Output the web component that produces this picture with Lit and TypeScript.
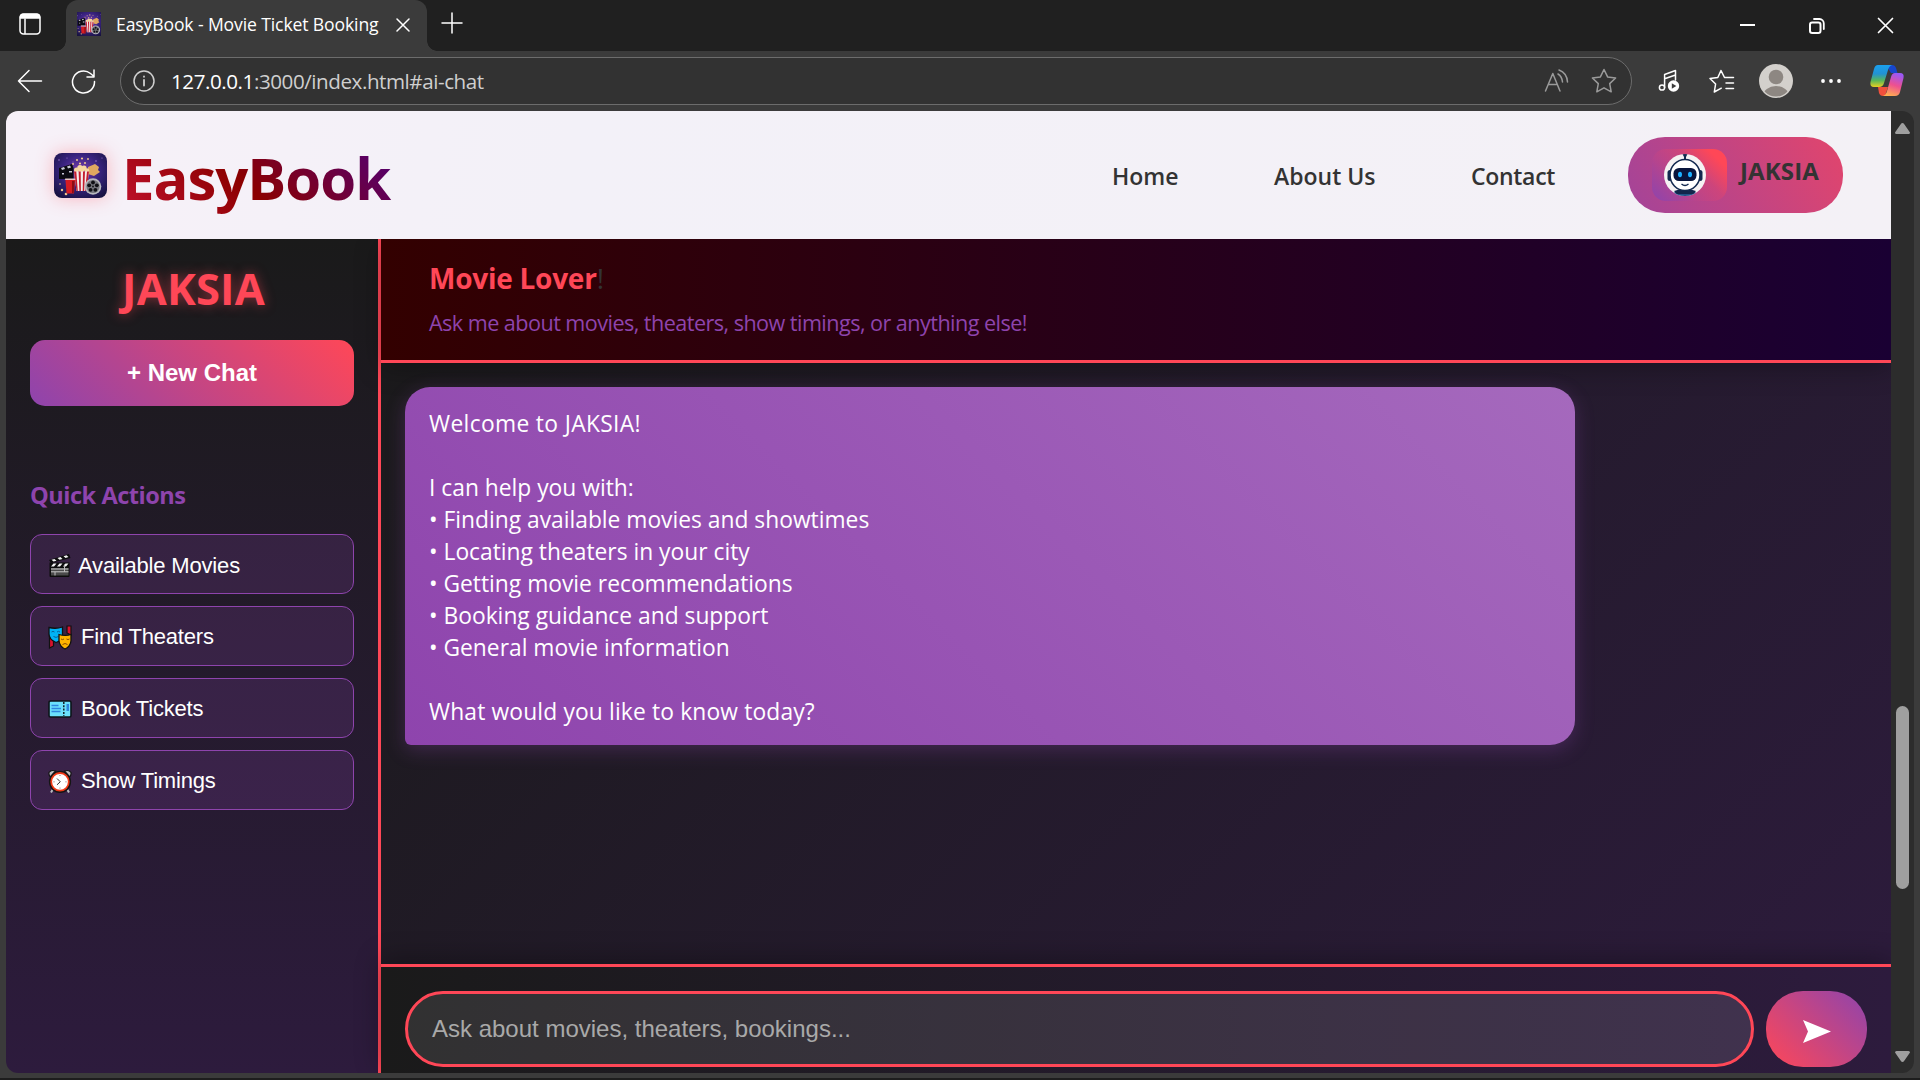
import { LitElement, html, css, svg } from "lit";
import { customElement } from "lit/decorators.js";

const artwork = svg`
  <defs>
    <radialGradient id="night" cx=".5" cy=".4" r=".7"><stop offset="0" stop-color="#7a3fb0"/><stop offset=".5" stop-color="#3a2380"/><stop offset="1" stop-color="#17123f"/></radialGradient>
  </defs>
  <rect width="53" height="45" fill="url(#night)"/>
  <g fill="#b58be0" opacity=".8"><circle cx="5" cy="7" r=".8"/><circle cx="13" cy="5" r=".6"/><circle cx="42" cy="8" r=".8"/><circle cx="48" cy="5" r=".6"/><circle cx="19" cy="9" r=".6"/></g>
  <g fill="#f0c890"><circle cx="23" cy="7" r="1"/><circle cx="28" cy="5.5" r="1.1"/><circle cx="34" cy="6" r=".9"/><circle cx="19" cy="11" r="1"/><circle cx="26" cy="10.5" r="1.1"/><circle cx="31" cy="10" r="1"/><circle cx="8" cy="37" r="1.2"/><circle cx="12" cy="41" r="1.3"/><circle cx="6" cy="31" r=".8"/></g>
  <path d="M5 15l13-4 1.500 4v11H5z" fill="#0b0b12"/>
  <path d="M7 15l3-1 1 2-3 1zM13 13.500l3-1 1 2-3 1zM8 20h2v1.500H8zM15 18h3v1.500h-3z" fill="#c8c8d8"/>
  <path d="M34 14l7-3 4 3-1 3 2 2-6 4-6-2z" fill="#e0a860"/>
  <g fill="#f6d6a0"><circle cx="22.500" cy="17" r="2.500"/><circle cx="26" cy="14.800" r="2.700"/><circle cx="30" cy="15.200" r="2.600"/><circle cx="33" cy="17.500" r="2.200"/><circle cx="27.500" cy="17.500" r="2.500"/></g>
  <path d="M20 18.500h15l-2.500 19.500h-10z" fill="#f5ecec"/>
  <path d="M20 18.500h2.300l1.500 19.500h-1.300zM24.600 18.500h2.100l.2 19.500h-1.500zM29 18.500h2l-.8 19.500h-1.500zM33 18.500h2L32.500 38H31z" fill="#c41e2e"/>
  <path d="M11.500 27h9.500l-1 13.500h-7.500z" fill="#d61c22"/><rect x="10.800" y="25.500" width="10.800" height="1.600" rx=".8" fill="#e8c8c8"/><path d="M18 28h2.500l-.8 12H18z" fill="#8d0d14"/>
  <circle cx="39" cy="33.500" r="8.300" fill="#b9b9be"/><circle cx="39" cy="33.500" r="6.600" fill="#77777e"/>
  <g fill="#101014"><circle cx="39" cy="29.500" r="1.900"/><circle cx="42.800" cy="32.300" r="1.900"/><circle cx="41.400" cy="36.800" r="1.900"/><circle cx="36.600" cy="36.800" r="1.900"/><circle cx="35.200" cy="32.300" r="1.900"/><circle cx="39" cy="33.500" r=".9"/></g>`;

const clapper = svg`<path d="M1 7L21 1l1.500 4L3 10z" fill="#0c0c0c"/><path d="M1.500 9.500h20V23a1 1 0 0 1-1 1h-18a1 1 0 0 1-1-1z" fill="#0c0c0c"/>
  <path d="M3.500 6.700l3-.8 2 1.800-3 .9zM9.500 5l3-.9 2 1.800-3 .9zM15.500 3.200l3-.9 2 1.800-3 .9z" fill="#f2f2f2"/>
  <path d="M5.500 10.500h3L6 13.500H3zM11.500 10.500h3l-2.500 3H9zM17.500 10.500h3l-2.500 3h-3z" fill="#f2f2f2"/>
  <rect x="3" y="15" width="17.500" height="7.500" fill="#4a4a4a"/><path d="M3 18.800h17.500M3 16h17.500" stroke="#c9c9c9" stroke-width="1"/><path d="M7 19v3.500M16.500 11.500V19" stroke="#bdbdbd" stroke-width="1"/>`;
const masks = svg`<path d="M1.500 9l4 3v9l-4 2zM19 1h4v9l-4-2z" fill="#d8122e" stroke="#111" stroke-width="1.200"/>
  <path d="M1 2.500C5 3.500 10 3.500 14.500 2v8c0 4-3.500 6.500-6.500 7.500C4.500 16 1 13 1 9z" fill="#00b2f5" stroke="#111" stroke-width="1.300"/>
  <path d="M3.500 7q1.500-1.300 3 0M9 7q1.500-1.300 3 0M5.500 11.500q2.500 1.800 5 0" fill="none" stroke="#0a5f96" stroke-width="1"/>
  <path d="M11 9.500c4 1.200 8.500 1.200 12 0v6c0 4-3 7.500-6 8.500-3-1-6-4.500-6-8.500z" fill="#ffb300" stroke="#111" stroke-width="1.300"/>
  <path d="M13 14q1.500 1.200 3 0M18.500 14q1.500 1.200 3 0M14.500 19.500q2.500-2 5 0" fill="none" stroke="#8c4d00" stroke-width="1"/>`;
const ticket = svg`<path d="M2.500 4h19A1.500 1.500 0 0 1 23 5.500v13a1.500 1.500 0 0 1-1.500 1.500h-19A1.500 1.500 0 0 1 1 18.500v-13A1.500 1.500 0 0 1 2.500 4z" fill="#6be1fb" stroke="#0d1418" stroke-width="1.600"/>
  <path d="M15.800 5v14" stroke="#0d1418" stroke-width="1.400" stroke-dasharray="2 1.300"/><path d="M3.500 8.500h7M3.500 11.500h9.500M3.500 14.500h9" stroke="#2e86dd" stroke-width="1.300"/><rect x="18.500" y="7" width="2.500" height="7" fill="#2e86dd"/>`;
const clock = svg`<path d="M1 3.500Q3 .5 7.500 2L2.500 8Q.5 6 1 3.500zM23 3.500Q21 .5 16.500 2l5 6q2-2 1.500-4.500z" fill="#b9bcc0" stroke="#151515" stroke-width="1.200"/>
  <path d="M5 20l-2 3.500M19 20l2 3.500" stroke="#b9bcc0" stroke-width="2"/><circle cx="12" cy="12.800" r="9.600" fill="#fff" stroke="#151515" stroke-width="3"/><circle cx="12" cy="12.800" r="8.800" fill="#fff" stroke="#f03a17" stroke-width="1.800"/>
  <path d="M9 9.500l3.300 3.300-3.300 3" fill="none" stroke="#333" stroke-width="1"/><g fill="#777"><circle cx="12" cy="6.500" r=".6"/><circle cx="12" cy="19" r=".6"/><circle cx="18" cy="12.800" r=".6"/><circle cx="6" cy="12.800" r=".6"/></g>`;

@customElement("browser-bar")
class BrowserBar extends LitElement {
  static styles = css`
    :host { display: block; color: #fff; font-family: "Open Sans", sans-serif; }
    svg { display: block; flex: none; fill: none; stroke: currentColor; stroke-width: 1.5; stroke-linecap: round; stroke-linejoin: round; }
    .flat { stroke: none; }
    .strip { display: flex; height: 51px; background: #202020; }
    .workspace { width: 66px; box-sizing: border-box; padding: 13px 0 0 19px; }
    .tab { position: relative; width: 361px; box-sizing: border-box; display: flex; align-items: center; padding: 0 17px 3px 11px; background: #3b3b3b; border-radius: 12px 12px 0 0; }
    .tab::before, .tab::after { content: ""; position: absolute; bottom: 0; width: 10px; height: 10px; }
    .tab::before { left: -10px; background: radial-gradient(circle at 0 0, #202020 9.5px, #3b3b3b 10px); }
    .tab::after { right: -10px; background: radial-gradient(circle at 100% 0, #202020 9.5px, #3b3b3b 10px); }
    .title { margin-left: 15px; font-size: 17.6px; white-space: nowrap; letter-spacing: -.13px; }
    .tab .close { margin-left: auto; margin-top: 2px; }
    .plus { margin: 12px 0 0 14px; }
    .windows { margin-left: auto; display: flex; gap: 52px; padding: 17px 26px 0 0; }
    .tools { display: flex; align-items: center; height: 60px; background: #3b3b3b; box-sizing: border-box; padding: 0 15px 0 17px; }
    .address { width: 1512px; height: 48px; box-sizing: border-box; margin-left: 24px; display: flex; align-items: center; border: 1px solid #6c6c6c; border-radius: 24px; background: #323232; padding: 0 14px 0 12px; }
    .url { margin-left: 16px; font-size: 20.6px; color: #cfcfcf; white-space: nowrap; letter-spacing: -.44px; }
    .url b { font-weight: 400; color: #fff; }
    .info { color: #cfcfcf; }
    .dim { color: #9a9a9a; }
    .read { margin-left: auto; margin-right: 22px; }
    .refresh { margin-left: 28px; }
    .music { margin-left: 26px; }
    .fav { margin-left: 29px; }
    .avatar { margin-left: 24px; }
    .dots { margin-left: 27px; }
    .copilot { margin-left: 27px; }
  `;
  render() {
    return html`
      <div class="strip">
        <div class="workspace"><svg width="22" height="22" viewBox="0 0 22 22"><rect x="1" y="1" width="20" height="20" rx="3.500"/><path d="M1.500 5V3.500A2 2 0 0 1 3.500 1.500h15a2 2 0 0 1 2 2V5z" fill="#fff"/><path d="M6 6v14.500" /></svg></div>
        <div class="tab">
          <svg class="flat" width="24" height="24" viewBox="4 0 45 45">${artwork}</svg>
          <span class="title">EasyBook - Movie Ticket Booking</span>
          <svg class="close" width="14" height="14" viewBox="0 0 14 14"><path d="M1 1l12 12M13 1L1 13"/></svg>
        </div>
        <svg class="plus" width="22" height="22" viewBox="0 0 22 22"><path d="M11 1v20M1 11h20"/></svg>
        <div class="windows">
          <svg width="17" height="17" viewBox="0 0 17 17"><path d="M1 8h15" stroke-width="2" stroke-linecap="butt"/></svg>
          <svg width="17" height="17" viewBox="0 0 17 17"><rect x="2" y="5.500" width="10.500" height="10.500" rx="2.200" stroke-width="2"/><path d="M6 2h5.500A4.500 4.500 0 0 1 15.800 6.500V12" stroke-width="1.800"/></svg>
          <svg width="17" height="17" viewBox="0 0 17 17"><path d="M1.500 1.500l14 14M15.500 1.500l-14 14" stroke-width="1.700"/></svg>
        </div>
      </div>
      <div class="tools">
        <svg width="26" height="24" viewBox="0 0 26 24"><path d="M12 1.500L1.500 12 12 22.500M1.500 12h23"/></svg>
        <svg class="refresh" width="25" height="25" viewBox="0 0 25 25"><path d="M23.500 12.500A11 11 0 1 1 19.500 4.500l3.500 3M23 1v7h-7"/></svg>
        <div class="address">
          <svg class="info" width="22" height="22" viewBox="0 0 22 22"><circle cx="11" cy="11" r="10"/><path d="M11 10v5.500M11 6.500v.3" stroke-width="1.800"/></svg>
          <span class="url"><b>127.0.0.1</b>:3000/index.html#ai-chat</span>
          <svg class="read dim" width="25" height="24" viewBox="0 0 25 24"><path d="M1.500 22L8.800 4.500 16 22M4.500 15.500h8.800M14 5q4 2.500 4.500 8M15 1q8 3 8.500 12" /></svg>
          <svg class="dim" width="26" height="26" viewBox="0 0 26 26"><path d="M13 1.500l3.600 7.400 8 1.100-5.900 5.600 1.500 8.200-7.200-4-7.200 4 1.500-8.200L1.400 10l8-1.100z"/></svg>
        </div>
        <svg class="music" width="22" height="24" viewBox="0 0 22 24"><circle cx="4" cy="18.500" r="2.600"/><path d="M6.600 18.500V5.500L17.500 1.500V11M6.600 9.800L17.500 6"/><g class="flat"><circle cx="15.500" cy="17" r="5.700" fill="#fff"/><path d="M13.800 14.300v5.400l4.500-2.700z" fill="#3b3b3b"/></g></svg>
        <svg class="fav" width="26" height="25" viewBox="0 0 26 25"><path d="M15.500 8.500h9M17 14h7.500M17 19.500h7.500M15.500 8.500L12 1.500 8.800 8.500 1 9.500l5.600 5.500L5.300 23l7-3.800"/></svg>
        <svg class="avatar" width="34" height="34" viewBox="0 0 34 34"><defs><clipPath id="face"><circle cx="17" cy="17" r="15.500"/></clipPath></defs><g class="flat"><circle cx="17" cy="17" r="17" fill="#d3d0cc"/><circle cx="17" cy="13" r="7.300" fill="#8d8782"/><ellipse cx="17" cy="32" rx="13" ry="10" fill="#8d8782" clip-path="url(#face)"/></g></svg>
        <svg class="dots" width="22" height="6" viewBox="0 0 22 6"><g class="flat" fill="#fff"><circle cx="3" cy="3" r="1.900"/><circle cx="11" cy="3" r="1.900"/><circle cx="19" cy="3" r="1.900"/></g></svg>
        <svg class="copilot" width="36" height="34" viewBox="0 0 36 34">
          <defs>
            <linearGradient id="ca" x1="0" y1="0" x2="0" y2="1"><stop offset="0" stop-color="#1aa0ee"/><stop offset=".4" stop-color="#2292d2"/><stop offset=".7" stop-color="#58b65a"/><stop offset="1" stop-color="#e8d020"/></linearGradient>
            <linearGradient id="cb" x1=".6" y1="0" x2=".3" y2="1"><stop offset="0" stop-color="#9a58f5"/><stop offset=".5" stop-color="#ee5090"/><stop offset="1" stop-color="#ffb050"/></linearGradient>
          </defs>
          <g class="flat">
            <path d="M17 1h6q3 0 4 3l1.500 5H22z" fill="#1746cc"/>
            <path d="M9 23h10l-3 9h-2q-3 0-4-3z" fill="#f0503c"/>
            <path d="M9 1h14q-3 1-4 5l-4 13q-1 4-5 4H5q-4.500 0-3.500-5L5 5q1-4 4-4z" fill="url(#ca)"/>
            <path d="M26 9h5q4.500 0 3.500 5L31 28q-1 4-5 4H14q3-1 4-5l4-14q1-4 4-4z" fill="url(#cb)"/>
          </g>
        </svg>
      </div>`;
  }
}

@customElement("site-header")
class SiteHeader extends LitElement {
  static styles = css`
    :host { position: relative; z-index: 1; display: flex; height: 128px; box-sizing: border-box; padding: 0 48px; background: linear-gradient(100deg, #f7f1f8, #f3f1f8 30%, #f4f1f6); color: #333; font-family: "Open Sans", sans-serif; }
    .logo { margin-top: 42px; width: 53px; height: 45px; border-radius: 8px; box-shadow: 0 0 18px rgba(255, 71, 87, .35); flex: none; }
    .brand { margin: 22px 0 0 15px; height: 90px; line-height: 90px; font-size: 58px; letter-spacing: -1px; font-weight: 700; background: linear-gradient(45deg, #c41230, #8b0000 45%, #4b0082); -webkit-background-clip: text; background-clip: text; color: transparent; width: 271px; white-space: nowrap; }
    nav { margin-left: auto; display: flex; height: 60px; margin-top: 35px; font-size: 23px; font-weight: 600; line-height: 60px; white-space: nowrap; }
    .home { width: 66px; margin-right: 96px; }
    .about { width: 102px; margin-right: 95px; }
    .contact { width: 85px; margin-right: 72px; letter-spacing: -.3px; }
    .pill { flex: none; margin-top: 26px; width: 215px; height: 76px; box-sizing: border-box; padding: 12px 24px; display: flex; border-radius: 37px; background: linear-gradient(60deg, #a34499, #e2456c); }
    .badge { width: 75px; height: 52px; box-sizing: border-box; border-radius: 14px; background: linear-gradient(45deg, #8e44ad, rgba(192,68,138,.3) 35%, rgba(222,69,112,.5) 60%, #ff4757 85%); padding: 4px 0 0 11px; }
    .name { margin: 5px 0 0 13px; font-size: 24px; line-height: 34px; font-weight: 700; letter-spacing: .14px; white-space: nowrap; }
  `;
  render() {
    return html`
      <svg class="logo" viewBox="0 0 53 45">${artwork}</svg>
      <div class="brand">EasyBook</div>
      <nav><span class="home">Home</span><span class="about">About Us</span><span class="contact">Contact</span></nav>
      <div class="pill">
        <div class="badge">
          <svg width="44" height="44" viewBox="0 0 44 44">
            <defs><clipPath id="disc"><circle cx="22" cy="22" r="21"/></clipPath></defs>
            <circle cx="22" cy="22" r="21" fill="#f5f2f3"/>
            <g clip-path="url(#disc)">
              <path d="M8 46q2-10 14-10t14 10z" fill="#1f5288"/><path d="M11 38q11-4 22 0l-3 3H14z" fill="#12264c"/>
              <rect x="4.500" y="17" width="5" height="11" rx="2.500" fill="#13294f"/><rect x="34.500" y="17" width="5" height="11" rx="2.500" fill="#13294f"/>
              <ellipse cx="22" cy="22" rx="15" ry="15.500" fill="#fff" stroke="#13294f" stroke-width="1.600"/>
              <path d="M19.500 1h5l-1.500 3v3h-2V4z" fill="#13294f"/>
              <rect x="10.500" y="15" width="23" height="13" rx="5.500" fill="#08153c"/>
              <ellipse cx="17" cy="21.500" rx="2" ry="2.800" fill="#1cb0ff"/><ellipse cx="27" cy="21.500" rx="2" ry="2.800" fill="#1cb0ff"/>
              <path d="M18.500 31q3.500 3 7 0" fill="none" stroke="#13294f" stroke-width="1.300"/>
            </g>
          </svg>
        </div>
        <span class="name">JAKSIA</span>
      </div>`;
  }
}

@customElement("chat-sidebar")
class ChatSidebar extends LitElement {
  static styles = css`
    :host { display: flex; flex-direction: column; width: 375px; flex: none; box-sizing: border-box; border-right: 3px solid #ff4757; padding: 0 24px; background: linear-gradient(180deg, #1a1a1a, #2d1b3d); font-family: "Open Sans", sans-serif; }
    h2 { margin: 19px 0 0; padding-left: 3px; height: 61px; line-height: 61px; text-align: center; font-size: 43.5px; letter-spacing: .2px; font-weight: 700; color: #ff4757; text-shadow: 0 0 12px rgba(255, 71, 87, .5); }
    .new { margin-top: 21px; height: 66px; border: 0; border-radius: 15px; background: linear-gradient(45deg, #8e44ad, #ff4757); color: #fff; font: 700 24px/66px "Liberation Sans", sans-serif; padding: 0; }
    h3 { margin: 74px 0 23px; height: 31px; line-height: 31px; font-size: 23.6px; letter-spacing: -.5px; font-weight: 700; color: #8e44ad; white-space: nowrap; }
    .list { display: flex; flex-direction: column; gap: 12px; }
    .action { height: 60px; box-sizing: border-box; display: flex; align-items: center; gap: 9px; border: 1px solid #8e44ad; border-radius: 12px; background: rgba(142, 68, 173, .2); color: #fff; padding: 2px 17px 0; font: 22px "Liberation Sans", sans-serif; letter-spacing: -.2px; }
    .action.first { gap: 6px; padding-top: 3px; letter-spacing: -.17px; }
    .action svg { flex: none; }
  `;
  private actions = [
    { icon: clapper, label: "Available Movies" },
    { icon: masks, label: "Find Theaters" },
    { icon: ticket, label: "Book Tickets" },
    { icon: clock, label: "Show Timings" },
  ];
  render() {
    return html`
      <h2>JAKSIA</h2>
      <button class="new">+ New Chat</button>
      <h3>Quick Actions</h3>
      <div class="list">${this.actions.map((a, i) => html`
        <button class="action ${i === 0 ? "first" : ""}"><svg width="24" height="25" viewBox="0 0 24 25">${a.icon}</svg><span>${a.label}</span></button>`)}
      </div>`;
  }
}

@customElement("chat-panel")
class ChatPanel extends LitElement {
  static styles = css`
    :host { flex: 1; min-width: 0; display: flex; flex-direction: column; background: linear-gradient(135deg, #1a1a1a, #2d1b3d); color: #fff; font-family: "Open Sans", sans-serif; }
    header { height: 124px; box-sizing: border-box; border-bottom: 3px solid #ff4757; background: linear-gradient(90deg, #330000, #1a0033); padding: 19px 48px 0; box-shadow: 0 5px 25px rgba(0, 0, 0, .3); }
    .who { height: 40px; line-height: 40px; font-size: 28px; letter-spacing: -.25px; color: #333; white-space: nowrap; }
    .who b { color: #ff4757; font-weight: 700; }
    .hint { margin-top: 9px; height: 32px; line-height: 32px; font-size: 21.6px; letter-spacing: -.54px; color: #8e44ad; white-space: nowrap; }
    .log { flex: 1; padding: 24px; }
    .bubble { width: 1170px; height: 358px; box-sizing: border-box; padding: 21px 24px 0; border-radius: 25px 25px 25px 6px; background: linear-gradient(45deg, #8e44ad, #a569bd); box-shadow: 0 5px 19px rgba(142, 68, 173, .3); font-size: 22.8px; line-height: 32px; }
    .bubble p { margin: 0; height: 32px; white-space: nowrap; }
    .bubble p:first-child { letter-spacing: .35px; }
    .bubble p:last-child { letter-spacing: .15px; }
    .bubble p.item::first-letter { letter-spacing: 1.5px; }
    footer { height: 109px; box-sizing: border-box; border-top: 3px solid #ff4757; background: linear-gradient(90deg, #1a1a1a, #2d1b3d); padding: 24px 24px 0; display: flex; gap: 12px; box-shadow: 0 -5px 25px rgba(0, 0, 0, .3); }
    .field { flex: 1; height: 76px; box-sizing: border-box; border: 3px solid #ff4757; border-radius: 38px; background: rgba(255, 255, 255, .1); padding: 0 24px; font: 24px/70px "Liberation Sans", sans-serif; color: #a9a9a9; }
    .send { width: 101px; height: 76px; border: 0; border-radius: 37px; background: linear-gradient(45deg, #ff4757, #8e44ad); display: flex; align-items: center; justify-content: center; padding: 4px 0 0; }
  `;
  private lines = [
    "Welcome to JAKSIA!",
    "",
    "I can help you with:",
    "• Finding available movies and showtimes",
    "• Locating theaters in your city",
    "• Getting movie recommendations",
    "• Booking guidance and support",
    "• General movie information",
    "",
    "What would you like to know today?",
  ];
  render() {
    return html`
      <header>
        <div class="who"><b>Movie Lover</b>!</div>
        <div class="hint">Ask me about movies, theaters, show timings, or anything else!</div>
      </header>
      <div class="log"><div class="bubble">${this.lines.map((l) => html`<p class=${l.startsWith("•") ? "item" : "plain"}>${l}</p>`)}</div></div>
      <footer>
        <div class="field">Ask about movies, theaters, bookings...</div>
        <button class="send"><svg width="28" height="23" viewBox="0 0 28 23"><path d="M0 0L28 11.500 0 23l5-11.500z" fill="#fff"/></svg></button>
      </footer>`;
  }
}

@customElement("app-root")
class AppRoot extends LitElement {
  static styles = css`
    :host { display: flex; flex-direction: column; width: 1920px; height: 1080px; overflow: hidden; background: #3b3b3b; }
    .view { display: flex; width: 1908px; height: 962px; margin-left: 6px; border-radius: 12px; overflow: hidden; }
    .page { width: 1885px; display: flex; flex-direction: column; }
    .body { flex: 1; display: flex; min-height: 0; }
    .scroll { flex: 1; box-sizing: border-box; background: #2c2c2c; padding: 12px 0 11px 4px; display: flex; flex-direction: column; }
    .thumb { width: 13px; height: 183px; margin: 572px 0 auto 1px; border-radius: 7px; background: #9f9f9f; }
    .edge { height: 2px; margin-top: 5px; background: #1d1d1d; }
  `;
  render() {
    return html`
      <browser-bar></browser-bar>
      <div class="view">
        <div class="page"><site-header></site-header><div class="body"><chat-sidebar></chat-sidebar><chat-panel></chat-panel></div></div>
        <div class="scroll">
          <svg width="15" height="11" viewBox="0 0 15 11"><path d="M7.500 0q1 0 1.600 1L15 9.500q0 1.500-1.500 1.500h-12Q0 11 0 9.500L5.900 1q.6-1 1.600-1z" fill="#9f9f9f"/></svg>
          <div class="thumb"></div>
          <svg width="15" height="11" viewBox="0 0 15 11"><path d="M7.500 11q1 0 1.600-1L15 1.500Q15 0 13.500 0h-12Q0 0 0 1.500L5.900 10q.6 1 1.600 1z" fill="#9f9f9f"/></svg>
        </div>
      </div>
      <div class="edge"></div>`;
  }
}
